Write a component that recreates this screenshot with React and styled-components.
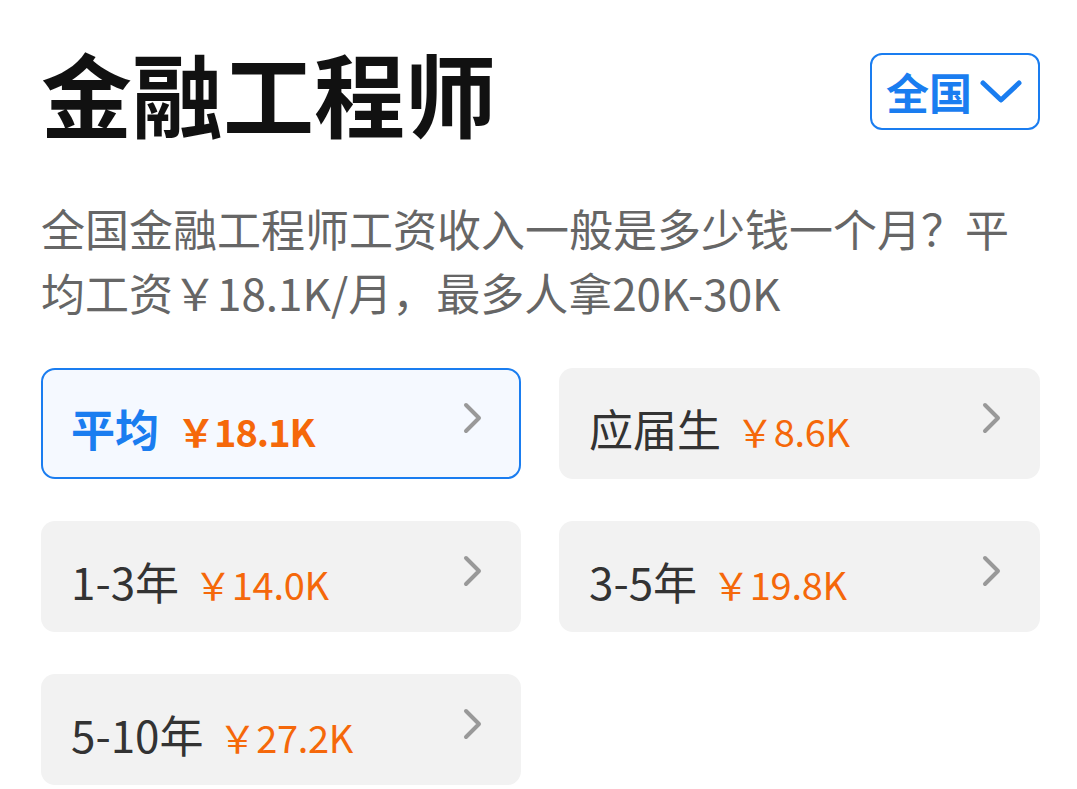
import React from "react";
import styled, { createGlobalStyle } from "styled-components";

const Global = createGlobalStyle`
  html, body { margin: 0; padding: 0; background: #fff; }
  body { font-family: "Noto Sans CJK SC", "Noto Sans", sans-serif; }
`;

const Page = styled.div`
  padding: 41px 37px 0 41px;
  box-sizing: border-box;
  width: 1077px;
`;

const Header = styled.div`
  display: flex;
  justify-content: space-between;
  align-items: flex-start;
`;

const Title = styled.h1`
  margin: 0;
  font-size: 91px;
  line-height: 100px;
  font-weight: 700;
  color: #111;
  letter-spacing: 0;
`;

const RegionButton = styled.button`
  display: flex;
  align-items: center;
  gap: 8px;
  height: 77px;
  margin-top: 12px;
  padding: 0 16px 0 14px;
  box-sizing: border-box;
  border: 2.5px solid #1a7df0;
  border-radius: 12px;
  background: #fff;
  color: #1a7df0;
  font-family: inherit;
  font-size: 43px;
  font-weight: 700;
  line-height: 1;
  cursor: pointer;
`;

const Desc = styled.p`
  margin: 55px 0 0 0;
  font-size: 44px;
  line-height: 64px;
  color: #666;
`;

const Grid = styled.div`
  display: grid;
  grid-template-columns: 480px 481px;
  column-gap: 38px;
  row-gap: 42px;
  margin-top: 44px;
`;

const Card = styled.div`
  position: relative;
  height: 111px;
  box-sizing: border-box;
  border-radius: 14px;
  border: 2px solid ${(p) => (p.$active ? "#1a7df0" : "transparent")};
  background: ${(p) => (p.$active ? "#f5f9ff" : "#f2f2f2")};
  display: flex;
  align-items: baseline;
  padding: 26px 0 0 28px;
`;

const Label = styled.span`
  font-size: 44px;
  line-height: 64px;
  color: ${(p) => (p.$active ? "#1a7df0" : "#333")};
  font-weight: ${(p) => (p.$active ? 700 : 400)};
`;

const Value = styled.span`
  margin-left: ${(p) => (p.$active ? "18px" : "15px")};
  font-size: 38px;
  line-height: 64px;
  color: #f5680a;
  font-weight: ${(p) => (p.$active ? 700 : 400)};
  letter-spacing: ${(p) => (p.$active ? "-1px" : "-0.3px")};
`;

const Chevron = styled.svg`
  position: absolute;
  right: 36px;
  top: 32px;
  width: 20px;
  height: 32px;
`;

const items = [
  { label: "平均", value: "￥18.1K", active: true },
  { label: "应届生", value: "￥8.6K" },
  { label: "1-3年", value: "￥14.0K" },
  { label: "3-5年", value: "￥19.8K" },
  { label: "5-10年", value: "￥27.2K" },
];

export default function App() {
  return (
    <Page>
      <Global />
      <Header>
        <Title>金融工程师</Title>
        <RegionButton>
          全国
          <svg width="42" height="24" viewBox="0 0 42 24">
            <path d="M3 3 L21 20 L39 3" fill="none" stroke="#1a7df0" strokeWidth="5" strokeLinecap="round" strokeLinejoin="round" />
          </svg>
        </RegionButton>
      </Header>
      <Desc>
        全国金融工程师工资收入一般是多少钱一个月？平均工资￥18.1K/月，最多人拿20K-30K
      </Desc>
      <Grid>
        {items.map((it) => (
          <Card key={it.label} $active={it.active}>
            <Label $active={it.active}>{it.label}</Label>
            <Value $active={it.active}>{it.value}</Value>
            <Chevron viewBox="0 0 20 32">
              <path d="M3 3 L16 16 L3 29" fill="none" stroke="#999" strokeWidth="4" strokeLinecap="round" strokeLinejoin="round" />
            </Chevron>
          </Card>
        ))}
      </Grid>
    </Page>
  );
}
